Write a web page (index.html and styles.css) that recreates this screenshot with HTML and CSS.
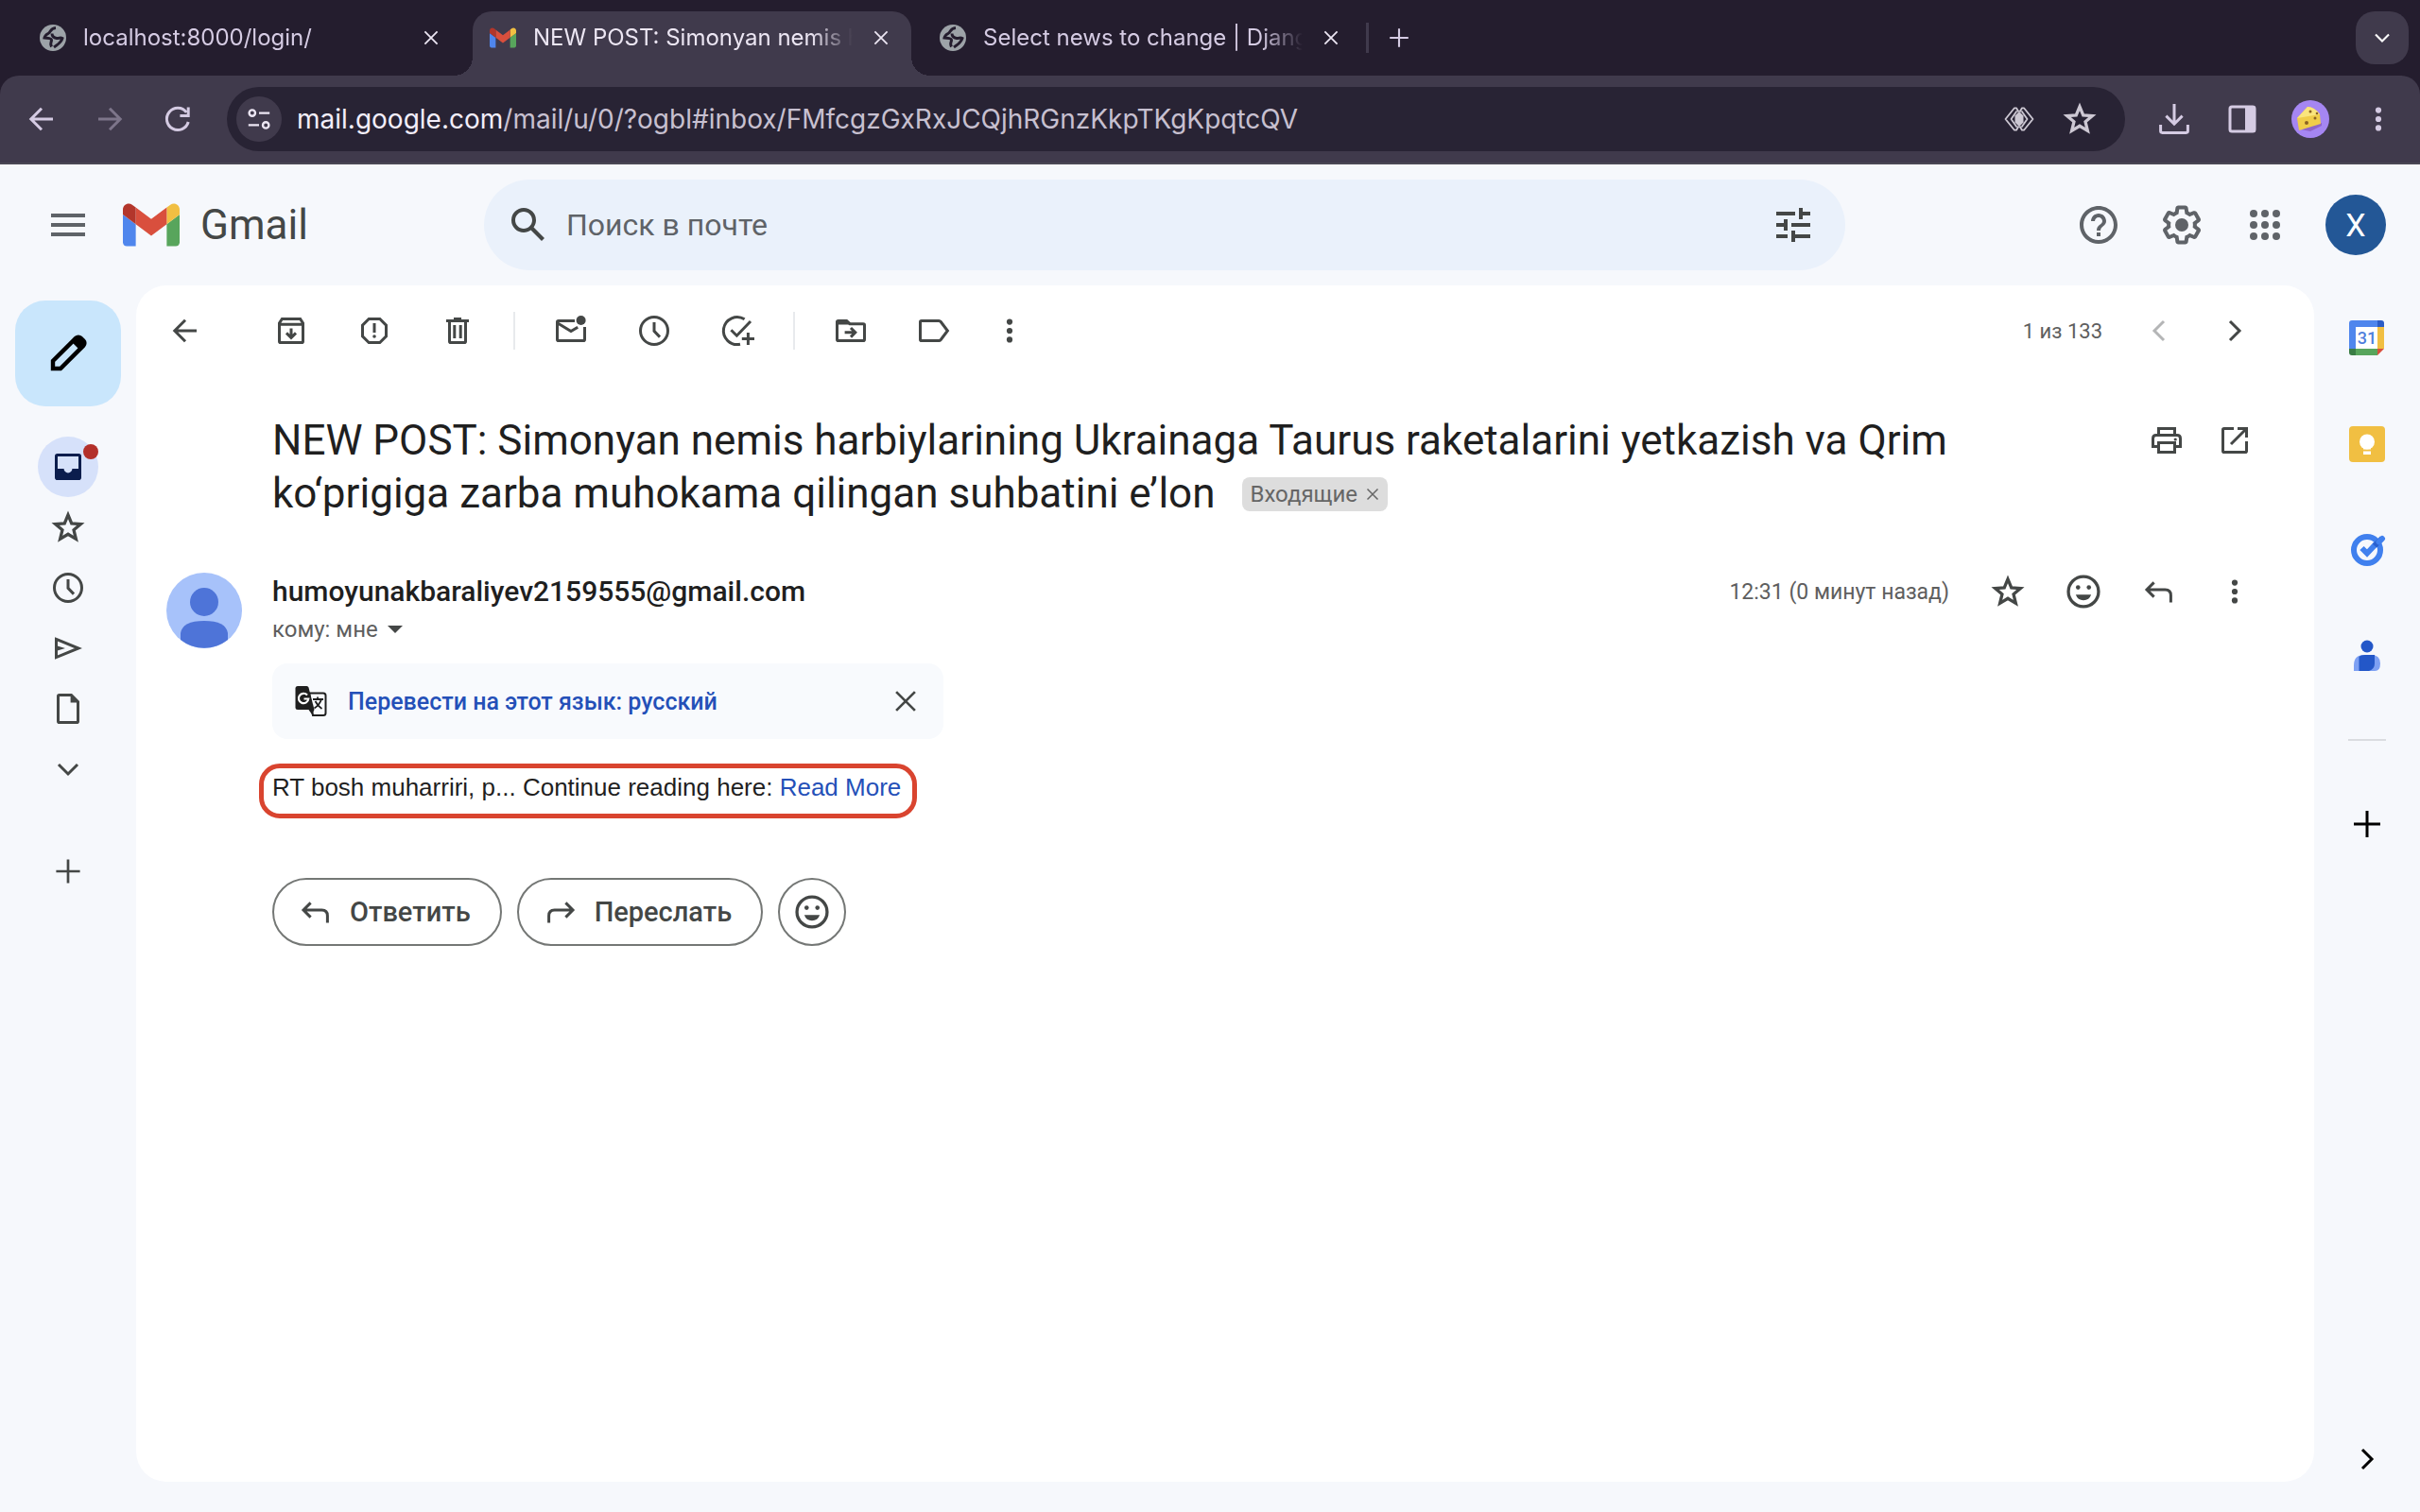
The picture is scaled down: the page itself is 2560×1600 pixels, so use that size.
FILE: index.html
```html
<!DOCTYPE html>
<html lang="ru">
<head>
<meta charset="utf-8">
<title>Gmail</title>
<link rel="stylesheet" href="styles.css">
</head>
<body>
<svg class="sprite" aria-hidden="true">
  <symbol id="globe" viewBox="0 0 28 28"><circle cx="14" cy="14" r="14" fill="#9da3a8"/><path d="M17 3.500C11 4 12 8 9 9.500C7 10.500 5.500 11.500 5 14C9 14.500 12.500 14 12.500 16.500C12.500 19 10.500 19.500 12.500 23.500M13 9.500C13 13 15 14 18 14.500C21 14.500 22 13.500 24 14.500C23 19 19 21 15 24" fill="none" stroke="#241d2e" stroke-width="3"/></symbol>
  <symbol id="gmail" viewBox="52 42 88 66"><path fill="#4f86ed" d="M58 108h14V74L52 59v43c0 3.320 2.690 6 6 6"/><path fill="#58a55c" d="M120 108h14c3.320 0 6-2.690 6-6V59l-20 15"/><path fill="#f1bf42" d="M120 48v26l20-15v-8c0-7.420-8.470-11.650-14.400-7.200"/><path fill="#d94f3d" d="M72 74V48l24 18 24-18v26L96 92"/><path fill="#b3362b" d="M52 51v8l20 15V48l-5.600-4.200c-5.940-4.450-14.400-.22-14.400 7.200"/></symbol>
  <symbol id="x" viewBox="0 0 20 20"><path d="M4.500 4.500l11 11M15.500 4.500l-11 11" class="ln"/></symbol>
  <symbol id="plus" viewBox="0 0 20 20"><path d="M10 3v14M3 10h14" class="ln"/></symbol>
  <symbol id="down" viewBox="0 0 20 20"><path d="M5 7.500l5 5 5-5" class="ln"/></symbol>
  <symbol id="left" viewBox="0 0 20 20"><path d="M12.500 5l-5 5 5 5" class="ln"/></symbol>
  <symbol id="right" viewBox="0 0 20 20"><path d="M7.500 5l5 5-5 5" class="ln"/></symbol>
  <symbol id="back" viewBox="0 0 20 20"><path d="M16 10H4.500M10 4.400L4.400 10l5.600 5.600" class="ln"/></symbol>
  <symbol id="fwd" viewBox="0 0 20 20"><path d="M4 10h11.500M10 4.400l5.600 5.600-5.600 5.600" class="ln"/></symbol>
  <symbol id="reload" viewBox="0 0 20 20"><path d="M15.600 11.500A5.800 5.800 0 1 1 14.600 6.400M15.600 3.800v4.400h-4.400" class="ln"/></symbol>
  <symbol id="site" viewBox="0 0 20 20"><g class="ln"><circle cx="5.500" cy="6" r="2"/><path d="M10 6h7M3 14h7"/><circle cx="14.500" cy="14" r="2"/></g></symbol>
  <symbol id="lens" viewBox="0 0 32 28"><path d="M16 6l4.500 4.500v7L16 22l-4.500-4.500v-7z" fill="currentColor"/><path d="M15.500 6.500L13 2.300H11L1.500 14 11 25.700h2L15.500 21.500M16.500 6.500L19 2.300H21L30.500 14 21 25.700h-2L16.500 21.500M13.500 5.500L7.500 14l6 8.500M18.500 5.500L24.500 14l-6 8.500" fill="none" stroke="currentColor" stroke-width="1.800" stroke-linejoin="round"/></symbol>
  <symbol id="star" viewBox="0 0 20 20"><path d="M10 4l1.700 4.100 4.400.35-3.350 2.850 1.050 4.300L10 13.300l-3.800 2.300 1.050-4.300L3.900 8.450l4.400-.35z" class="ln"/></symbol>
  <symbol id="download" viewBox="0 0 20 20"><path d="M10 2v10.500M5.700 8.300L10 12.600l4.300-4.300M2.800 13v3.300q0 .9.900.9h12.600q.9 0 .9-.9V13" class="ln"/></symbol>
  <symbol id="panel" viewBox="0 0 20 20"><rect x="3.500" y="3.500" width="13" height="13" rx="1" class="ln"/><path d="M11.500 3H16q1 0 1 1v12q0 1-1 1h-4.500z" fill="currentColor"/></symbol>
  <symbol id="cheese" viewBox="0 0 40 40"><circle cx="20" cy="20" r="20" fill="#a586f2"/><path d="M10 31L20 33 32 27V24L12 29z" fill="#8e65c8"/><path d="M6 19L17 7q7 0 13 8l1 10L8 32Z" fill="#f0cd4a"/><path d="M6 19L17 7q7 0 13 8z" fill="#fae57d"/><g fill="#8c6222"><circle cx="16" cy="24" r="2"/><circle cx="25" cy="19" r="1.500"/><circle cx="20" cy="12" r="1.500"/><circle cx="27" cy="14" r="1.300"/></g></symbol>
  <symbol id="more" viewBox="0 0 20 20"><g fill="currentColor"><circle cx="10" cy="5.300" r="1.550"/><circle cx="10" cy="10" r="1.550"/><circle cx="10" cy="14.700" r="1.550"/></g></symbol>
  <symbol id="menu" viewBox="0 0 24 24"><path fill="currentColor" d="M3 18h18v-2H3v2zm0-5h18v-2H3v2zm0-7v2h18V6H3z"/></symbol>
  <symbol id="search" viewBox="0 0 24 24"><path fill="currentColor" d="M20.490 19l-5.730-5.730C15.530 12.200 16 10.910 16 9.500A6.500 6.500 0 1 0 9.500 16c1.410 0 2.700-.47 3.770-1.240L19 20.490 20.490 19zM5 9.500C5 7.010 7.010 5 9.500 5S14 7.010 14 9.500 11.990 14 9.500 14 5 11.990 5 9.500z"/></symbol>
  <symbol id="tune" viewBox="0 0 24 24"><path fill="currentColor" d="M3 17v2h6v-2H3zM3 5v2h10V5H3zm10 16v-2h8v-2h-8v-2h-2v6h2zM7 9v2H3v2h4v2h2V9H7zm14 4v-2H11v2h10zm-6-4h2V7h4V5h-4V3h-2v6z"/></symbol>
  <symbol id="help" viewBox="0 0 24 24"><path fill="currentColor" d="M11 18h2v-2h-2v2zm1-16C6.480 2 2 6.480 2 12s4.480 10 10 10 10-4.480 10-10S17.520 2 12 2zm0 18c-4.410 0-8-3.590-8-8s3.590-8 8-8 8 3.590 8 8-3.590 8-8 8zm0-14c-2.210 0-4 1.790-4 4h2c0-1.100.9-2 2-2s2 .9 2 2c0 2-3 1.750-3 5h2c0-2.250 3-2.500 3-5 0-2.210-1.790-4-4-4z"/></symbol>
  <symbol id="gear" viewBox="0 0 24 24"><path fill="currentColor" d="M13.850 22.250h-3.700c-.74 0-1.360-.54-1.450-1.270l-.27-1.890c-.27-.14-.53-.29-.79-.46l-1.800.72c-.7.260-1.470-.03-1.810-.65L2.200 15.530c-.35-.66-.2-1.440.36-1.880l1.530-1.190c-.01-.15-.02-.3-.02-.46 0-.15.010-.31.020-.46l-1.520-1.190c-.59-.45-.74-1.260-.37-1.880l1.850-3.190c.34-.62 1.110-.9 1.790-.63l1.810.73c.26-.17.520-.32.780-.46l.27-1.910c.09-.7.710-1.250 1.440-1.250h3.700c.74 0 1.360.54 1.450 1.270l.27 1.890c.27.140.53.290.79.460l1.800-.72c.71-.26 1.480.03 1.820.65l1.840 3.180c.36.660.2 1.440-.36 1.880l-1.520 1.190c.01.150.02.300.02.460s-.01.310-.02.460l1.520 1.190c.56.450.72 1.230.37 1.860l-1.860 3.220c-.34.620-1.110.9-1.800.630l-1.800-.72c-.26.170-.52.320-.78.460l-.27 1.910c-.1.680-.72 1.220-1.460 1.220zm-3.230-2h2.760l.37-2.550.53-.22c.44-.18.880-.44 1.340-.78l.45-.34 2.380.96 1.380-2.400-2.030-1.580.07-.56c.03-.26.060-.51.060-.78s-.03-.53-.06-.78l-.07-.56 2.030-1.580-1.390-2.400-2.390.96-.45-.35c-.42-.32-.87-.58-1.330-.77l-.52-.22-.37-2.550h-2.760l-.37 2.550-.53.210c-.44.190-.88.440-1.340.790l-.45.330-2.380-.95-1.390 2.390 2.030 1.580-.07.560a7 7 0 0 0-.06.790c0 .26.020.53.060.780l.07.560-2.030 1.580 1.380 2.400 2.390-.96.450.35c.43.330.86.580 1.330.770l.53.220.38 2.550z"/><circle cx="12" cy="12" r="3.500" fill="currentColor"/></symbol>
  <symbol id="apps" viewBox="0 0 24 24"><g fill="currentColor"><circle cx="6" cy="6" r="2"/><circle cx="12" cy="6" r="2"/><circle cx="18" cy="6" r="2"/><circle cx="6" cy="12" r="2"/><circle cx="12" cy="12" r="2"/><circle cx="18" cy="12" r="2"/><circle cx="6" cy="18" r="2"/><circle cx="12" cy="18" r="2"/><circle cx="18" cy="18" r="2"/></g></symbol>
  <symbol id="pencil" viewBox="0 0 24 24"><path d="M4 20v-4L16.200 3.800a1.800 1.800 0 0 1 2.500 0l1.500 1.500a1.800 1.800 0 0 1 0 2.500L8 20z" fill="none" stroke="currentColor" stroke-width="2.200"/><path d="M14 6l4 4 2.800-2.800V5L19 3.200h-2.200z" fill="currentColor"/></symbol>
  <symbol id="inbox" viewBox="0 0 20 20"><path fill="currentColor" fill-rule="evenodd" d="M4.400 3h11.200A1.400 1.400 0 0 1 17 4.400v11.200a1.400 1.400 0 0 1-1.400 1.400H4.400A1.400 1.400 0 0 1 3 15.600V4.400A1.400 1.400 0 0 1 4.400 3zm.1 1.500v6.500h3.300a2.200 2.200 0 0 0 4.400 0h3.300V4.500z"/></symbol>
  <symbol id="clock" viewBox="0 0 20 20"><g class="ln"><circle cx="10" cy="10" r="7.250"/><path d="M10 5.500v4.700l3 3.100"/></g></symbol>
  <symbol id="send" viewBox="0 0 20 20"><path d="M3.750 5.200L15.500 10 3.750 14.800z" class="ln"/><path d="M3.500 8.500l5 1.500-5 1.500z" fill="currentColor"/></symbol>
  <symbol id="file" viewBox="0 0 20 20"><path d="M5.400 2.750h6.300l3.550 3.550v10.300q0 .65-.65.65H5.400q-.65 0-.65-.65V3.400q0-.65.650-.65z" class="ln"/><path d="M11.300 2.500v4.300h4.300z" fill="currentColor"/></symbol>
  <symbol id="archive" viewBox="0 0 20 20"><path d="M3.750 6v9.600q0 .65.650.65h11.200q.65 0 .65-.65V6L14.800 3.750H5.200zM3.750 6.600h12.500M10 8.800v4.700M7.500 11.200L10 13.700l2.500-2.500" class="ln"/></symbol>
  <symbol id="spam" viewBox="0 0 20 20"><path d="M7.100 3.750h5.800l3.350 3.350v5.800l-3.350 3.350H7.100L3.750 12.900V7.100zM10 6v5" class="ln"/><circle cx="10" cy="13" r=".9" fill="currentColor"/></symbol>
  <symbol id="trash" viewBox="0 0 20 20"><path d="M4 4.750h12M8 3.700h4M5.750 5v10.600q0 .65.650.65h7.200q.65 0 .65-.65V5M8.400 7v7M11.600 7v7" class="ln"/></symbol>
  <symbol id="unread" viewBox="0 0 20 20"><path d="M12 4.750H3.400q-.65 0-.65.65v9.200q0 .65.650.65h13.200q.65 0 .65-.65V8M3 6l7 4.300 3.600-2.200" class="ln"/><circle cx="15.300" cy="4.500" r="2.500" fill="currentColor"/></symbol>
  <symbol id="task" viewBox="0 0 20 20"><path d="M13.800 3.900A7.250 7.250 0 1 0 11.500 17.100M6.700 9.600l3 3L17 5M15.700 11v6.500M12.400 14.200H19" class="ln"/></symbol>
  <symbol id="move" viewBox="0 0 20 20"><path d="M2.750 5v9.600q0 .65.650.65h13.200q.65 0 .65-.65V7q0-.65-.65-.65H9.500L7.800 4.750H3.400q-.65 0-.65.65M6.800 10.900h5.500M10 8.500l2.400 2.400L10 13.300" class="ln"/><path d="M2.500 4.500h5.300l2 2.200H2.500z" fill="currentColor"/></symbol>
  <symbol id="label" viewBox="0 0 20 20"><path d="M3.400 4.750h9.200q.6 0 1 .5L17.200 10l-3.600 4.750q-.4.500-1 .5H3.400q-.65 0-.65-.65V5.400q0-.65.650-.65z" class="ln"/></symbol>
  <symbol id="print" viewBox="0 0 20 20"><path d="M5.750 7V3.750h8.500V7M5.500 13.250H2.750V9q0-1.750 1.750-1.750h11q1.750 0 1.750 1.750v4.250H14.500M5.750 11.250h8.500v5h-8.500z" class="ln"/><circle cx="14.600" cy="9.500" r=".8" fill="currentColor"/></symbol>
  <symbol id="open" viewBox="0 0 20 20"><path d="M9.500 3.750H4.400q-.65 0-.65.65v11.200q0 .65.650.65h11.200q.65 0 .65-.65V10.500M8 12l8-8M11.500 3.750h4.750V8.500" class="ln"/></symbol>
  <symbol id="smile" viewBox="0 0 20 20"><circle cx="10" cy="10" r="7.250" class="ln"/><g fill="currentColor"><circle cx="7.400" cy="8" r="1.050"/><circle cx="12.600" cy="8" r="1.050"/><path d="M6.300 11.500h7.400a3.900 3.900 0 0 1-7.400 0z"/></g></symbol>
  <symbol id="reply" viewBox="0 0 20 20"><path d="M7.300 5.200L3.500 9l3.800 3.800M3.800 9h9.400q3 0 3 3v3.800" class="ln"/></symbol>
  <symbol id="forward" viewBox="0 0 20 20"><path d="M12.700 5.200L16.500 9l-3.800 3.800M16.200 9H6.800q-3 0-3 3v3.800" class="ln"/></symbol>
  <symbol id="person" viewBox="0 0 80 80"><circle cx="40" cy="40" r="40" fill="#a7c2fa"/><circle cx="40" cy="31" r="15" fill="#4e74d8"/><path d="M15 71V64Q17 51 40 51T65 64V71A40 40 0 0 1 15 71z" fill="#4e74d8"/></symbol>
  <symbol id="translate" viewBox="0 0 34 34"><path d="M15 8.500h15q2.500 0 2.500 2.500v18.500q0 2.500-2.500 2.500H19z" fill="none" stroke="#1f1f1f" stroke-width="2"/><path d="M3 1h9.500q1.500 0 2 1.500L20.500 26H3q-2.500 0-2.500-2.500V3.500Q.5 1 3 1z" fill="#1f1f1f"/><path d="M14.500 26h6L18 31z" fill="#1f1f1f"/><path d="M13 10.500A5.200 5.200 0 1 0 14.300 14.500H9.500" fill="none" stroke="#fff" stroke-width="2.200"/><path d="M19 15h11M24 12.500V15M28 15q-2 6-7.500 9.500M21.500 17q2.500 5 7 8" fill="none" stroke="#1f1f1f" stroke-width="1.800"/></symbol>
  <symbol id="keep" viewBox="0 0 40 40"><rect x="1" y="1" width="38" height="38" rx="4" fill="#f1bf42"/><circle cx="20" cy="17.500" r="8" fill="#fff"/><path d="M16 22h8v3.500h-8zM16 27.500h8V31h-8z" fill="#fff"/></symbol>
  <symbol id="tasks" viewBox="0 4 40 40"><circle cx="20" cy="24" r="14" fill="none" stroke="#4080ee" stroke-width="6"/><path d="M14.500 22L20 27.500 29 18" fill="none" stroke="#4080ee" stroke-width="6"/><path d="M28 19.500L36 11.500" stroke="#2860cf" stroke-width="6"/><path d="M32.500 15.500L36 12" stroke="#4080ee" stroke-width="6" stroke-linecap="round"/></symbol>
  <symbol id="contacts" viewBox="0 0 40 40"><circle cx="20" cy="10" r="6.500" fill="#2357c8"/><path d="M6 36V30Q6 19 17 19h7Q34 19 34 28T27 36z" fill="#7da0f3"/><path d="M11.500 36V21Q13 19 18 19h10V28Q28 34 22 36z" fill="#2357c8"/></symbol>
</svg>

<div class="chrome">
  <div class="tabs">
    <div class="tab"><svg class="fav"><use href="#globe"/></svg><span class="tab-title">localhost:8000/login/</span><button class="tab-close" aria-label="Закрыть"><svg class="i24"><use href="#x"/></svg></button></div>
    <div class="tab active"><svg class="fav"><use href="#gmail"/></svg><span class="tab-title">NEW POST: Simonyan nemis harbiylarining</span><button class="tab-close" aria-label="Закрыть"><svg class="i24"><use href="#x"/></svg></button></div>
    <div class="tab"><svg class="fav"><use href="#globe"/></svg><span class="tab-title">Select news to change | Django site admin</span><button class="tab-close" aria-label="Закрыть"><svg class="i24"><use href="#x"/></svg></button></div>
    <span class="tab-sep"></span>
    <button class="new-tab" aria-label="Новая вкладка"><svg class="i28"><use href="#plus"/></svg></button>
    <button class="tab-list" aria-label="Список вкладок"><svg class="i28"><use href="#down"/></svg></button>
  </div>
  <div class="navbar">
    <div class="nav-group">
      <button class="nav-btn" aria-label="Назад"><svg class="i40"><use href="#back"/></svg></button>
      <button class="nav-btn dim" aria-label="Вперёд"><svg class="i40"><use href="#fwd"/></svg></button>
      <button class="nav-btn" aria-label="Обновить"><svg class="i40"><use href="#reload"/></svg></button>
    </div>
    <div class="omnibox">
      <button class="site-info" aria-label="О сайте"><svg class="i32"><use href="#site"/></svg></button>
      <p class="url"><b>mail.google.com</b>/mail/u/0/?ogbl#inbox/FMfcgzGxRxJCQjhRGnzKkpTKgKpqtcQV</p>
      <button class="omni-btn" aria-label="Объектив"><svg class="i32"><use href="#lens"/></svg></button>
      <button class="omni-btn" aria-label="Закладка"><svg class="i44"><use href="#star"/></svg></button>
    </div>
    <div class="nav-group">
      <button class="nav-btn" aria-label="Загрузки"><svg class="i40"><use href="#download"/></svg></button>
      <button class="nav-btn" aria-label="Боковая панель"><svg class="i40"><use href="#panel"/></svg></button>
      <button class="nav-btn" aria-label="Профиль"><svg class="i40"><use href="#cheese"/></svg></button>
      <button class="nav-btn" aria-label="Меню"><svg class="i40"><use href="#more"/></svg></button>
    </div>
  </div>
</div>

<header class="header">
  <div class="brand">
    <button class="icon-btn" aria-label="Главное меню"><svg class="i48"><use href="#menu"/></svg></button>
    <a class="logo" href="#"><svg class="logo-mark"><use href="#gmail"/></svg><span>Gmail</span></a>
  </div>
  <form class="search">
    <button type="button" class="search-btn" aria-label="Поиск"><svg class="i48"><use href="#search"/></svg></button>
    <input type="text" placeholder="Поиск в почте" aria-label="Поиск в почте">
    <button type="button" class="search-btn" aria-label="Параметры поиска"><svg class="i48"><use href="#tune"/></svg></button>
  </form>
  <div class="account">
    <button class="icon-btn" aria-label="Справка"><svg class="i48"><use href="#help"/></svg></button>
    <button class="icon-btn" aria-label="Настройки"><svg class="i48"><use href="#gear"/></svg></button>
    <button class="icon-btn" aria-label="Приложения"><svg class="i48"><use href="#apps"/></svg></button>
    <button class="avatar">X</button>
  </div>
</header>

<div class="layout">
  <nav class="side">
    <button class="compose" aria-label="Написать"><svg class="i48"><use href="#pencil"/></svg></button>
    <a class="side-link current" href="#" aria-label="Входящие"><svg class="i40"><use href="#inbox"/></svg><span class="dot"></span></a>
    <a class="side-link" href="#" aria-label="Помеченные"><svg class="i44"><use href="#star"/></svg></a>
    <a class="side-link" href="#" aria-label="Отложенные"><svg class="i40"><use href="#clock"/></svg></a>
    <a class="side-link" href="#" aria-label="Отправленные"><svg class="i40"><use href="#send"/></svg></a>
    <a class="side-link" href="#" aria-label="Черновики"><svg class="i40"><use href="#file"/></svg></a>
    <a class="side-link" href="#" aria-label="Ещё"><svg class="i40"><use href="#down"/></svg></a>
    <button class="side-add" aria-label="Создать ярлык"><svg class="i36"><use href="#plus"/></svg></button>
  </nav>

  <main class="card">
    <div class="toolbar">
      <button class="icon-btn first" aria-label="Назад"><svg class="i40"><use href="#back"/></svg></button>
      <button class="icon-btn" aria-label="Архивировать"><svg class="i40"><use href="#archive"/></svg></button>
      <button class="icon-btn" aria-label="Спам"><svg class="i40"><use href="#spam"/></svg></button>
      <button class="icon-btn" aria-label="Удалить"><svg class="i40"><use href="#trash"/></svg></button>
      <span class="sep"></span>
      <button class="icon-btn" aria-label="Не прочитано"><svg class="i40"><use href="#unread"/></svg></button>
      <button class="icon-btn" aria-label="Отложить"><svg class="i40"><use href="#clock"/></svg></button>
      <button class="icon-btn" aria-label="Добавить в Задачи"><svg class="i40"><use href="#task"/></svg></button>
      <span class="sep"></span>
      <button class="icon-btn" aria-label="Переместить"><svg class="i40"><use href="#move"/></svg></button>
      <button class="icon-btn" aria-label="Ярлыки"><svg class="i40"><use href="#label"/></svg></button>
      <button class="icon-btn narrow" aria-label="Ещё"><svg class="i40"><use href="#more"/></svg></button>
      <div class="pager">
        <span>1 из 133</span>
        <button class="icon-btn faded" aria-label="Предыдущее"><svg class="i40"><use href="#left"/></svg></button>
        <button class="icon-btn" aria-label="Следующее"><svg class="i40"><use href="#right"/></svg></button>
      </div>
    </div>

    <div class="subject">
      <h1>NEW POST: Simonyan nemis harbiylarining Ukrainaga Taurus raketalarini yetkazish va Qrim ko‘prigiga zarba muhokama qilingan suhbatini e’lon <span class="chip">Входящие<button aria-label="Убрать ярлык"><svg class="i20"><use href="#x"/></svg></button></span></h1>
      <div class="subject-tools">
        <button class="icon-btn" aria-label="Печать"><svg class="i40"><use href="#print"/></svg></button>
        <button class="icon-btn" aria-label="В новом окне"><svg class="i40"><use href="#open"/></svg></button>
      </div>
    </div>

    <article class="message">
      <svg class="sender-pic"><use href="#person"/></svg>
      <div class="content">
        <div class="meta">
          <div>
            <h2>humoyunakbaraliyev2159555@gmail.com</h2>
            <p class="to">кому: мне <span class="caret"></span></p>
          </div>
          <div class="meta-tools">
            <span class="date">12:31 (0 минут назад)</span>
            <button class="icon-btn" aria-label="Пометить"><svg class="i44"><use href="#star"/></svg></button>
            <button class="icon-btn" aria-label="Реакция"><svg class="i44"><use href="#smile"/></svg></button>
            <button class="icon-btn" aria-label="Ответить"><svg class="i40"><use href="#reply"/></svg></button>
            <button class="icon-btn" aria-label="Ещё"><svg class="i40"><use href="#more"/></svg></button>
          </div>
        </div>
        <div class="translate">
          <svg class="i34"><use href="#translate"/></svg>
          <a href="#">Перевести на этот язык: русский</a>
          <button class="icon-btn" aria-label="Закрыть"><svg class="i36"><use href="#x"/></svg></button>
        </div>
        <p class="text">RT bosh muharriri, p... Continue reading here: <a href="#">Read More</a></p>
        <div class="actions">
          <button class="pill"><svg class="i40"><use href="#reply"/></svg>Ответить</button>
          <button class="pill"><svg class="i40"><use href="#forward"/></svg>Переслать</button>
          <button class="pill round" aria-label="Реакция"><svg class="i44"><use href="#smile"/></svg></button>
        </div>
      </div>
    </article>
  </main>

  <aside class="rail">
    <button class="rail-btn" aria-label="Календарь">
      <svg class="i40" viewBox="0 0 40 40"><path d="M4 1h28v7H8v24H1V4q0-3 3-3z" fill="#4f86ed"/><path d="M31 1h4q3 0 3 3v4h-7z" fill="#2c5cc5"/><path d="M31 8h7v23h-7z" fill="#f1bf42"/><path d="M8 31h23v7H8z" fill="#58a55c"/><path d="M1 31h7v7H4q-3 0-3-3z" fill="#3a7d45"/><path d="M31 31h7l-7 7z" fill="#d94f3d"/><path d="M8 8h23v23H8z" fill="#fff"/><text x="20" y="26" class="day">31</text></svg>
    </button>
    <button class="rail-btn" aria-label="Keep"><svg class="i40"><use href="#keep"/></svg></button>
    <button class="rail-btn" aria-label="Задачи"><svg class="i40"><use href="#tasks"/></svg></button>
    <button class="rail-btn" aria-label="Контакты"><svg class="i40"><use href="#contacts"/></svg></button>
    <hr>
    <button class="rail-btn strong" aria-label="Дополнения"><svg class="i40"><use href="#plus"/></svg></button>
    <button class="rail-btn strong last" aria-label="Скрыть панель"><svg class="i40"><use href="#right"/></svg></button>
  </aside>
</div>
</body>
</html>
```
FILE: styles.css
```css
* { box-sizing: border-box; }
body {
  margin: 0;
  min-height: 100vh;
  display: flex;
  flex-direction: column;
  background: #f6f8fc;
  color: #1f1f1f;
  font-family: Roboto, "Liberation Sans", sans-serif;
  font-size: 24px;
}
h1, h2, p { margin: 0; font-weight: 400; }
button {
  padding: 0;
  border: 0;
  background: none;
  color: inherit;
  font: inherit;
  display: flex;
  align-items: center;
  justify-content: center;
}
a { color: #2450b8; text-decoration: none; }
svg { display: block; flex: none; }
.sprite { position: absolute; width: 0; height: 0; }
.ln { fill: none; stroke: currentColor; stroke-width: 1.5; }
.i20 { width: 20px; height: 20px; }
.i24 { width: 24px; height: 24px; }
.i28 { width: 28px; height: 28px; }
.i32 { width: 32px; height: 32px; }
.i34 { width: 34px; height: 34px; }
.i36 { width: 36px; height: 36px; }
.i40 { width: 40px; height: 40px; }
.i44 { width: 44px; height: 44px; }
.i48 { width: 48px; height: 48px; }
.icon-btn { width: 80px; height: 80px; flex: none; color: #444746; }

/* Browser window */
.chrome { background: #241d2e; font-family: Inter, sans-serif; color: #d5cbe3; }
.tabs { display: flex; height: 80px; padding: 12px 12px 0 24px; }
.tab {
  position: relative;
  display: flex;
  align-items: center;
  flex: 0 1 464px;
  min-width: 0;
  height: 68px;
  margin-right: 12px;
  padding: 0 16px 12px 18px;
}
.tab.active { background: #403a4c; border-radius: 20px 20px 0 0; color: #ece6f3; }
.tab.active::before, .tab.active::after {
  content: "";
  position: absolute;
  bottom: 0;
  width: 20px;
  height: 20px;
}
.tab.active::before { right: 100%; background: radial-gradient(circle at 0 0, transparent 20px, #403a4c 20px); }
.tab.active::after { left: 100%; background: radial-gradient(circle at 100% 0, transparent 20px, #403a4c 20px); }
.fav { width: 28px; height: 28px; }
.tab-title {
  flex: 1;
  min-width: 0;
  margin: 0 14px 0 18px;
  overflow: hidden;
  white-space: nowrap;
  line-height: 32px;
  mask-image: linear-gradient(to right, #000 calc(100% - 44px), transparent);
}
.tab-close { width: 32px; height: 32px; }
.tab-close .ln, .tab-list .ln, .new-tab .ln { stroke-width: 2; }
.tab-close { color: #ece6f3; }
.tab-sep { width: 3px; height: 32px; margin: 12px 8px 0 -7px; background: #403a4c; }
.new-tab { width: 48px; height: 56px; }
.tab-list { width: 56px; height: 56px; margin-left: auto; border-radius: 20px; background: #403a4c; color: #fff; }
.navbar {
  display: flex;
  align-items: center;
  gap: 24px;
  height: 94px;
  padding: 0 16px;
  border-bottom: 2px solid #4a4754;
  border-radius: 20px 20px 0 0;
  background: #403a4c;
}
.nav-group { display: flex; gap: 16px; }
.nav-btn { width: 56px; height: 56px; }
.nav-btn .ln { stroke-width: 2; }
.dim { color: #7d758a; }
.omnibox {
  display: flex;
  align-items: center;
  flex: 1;
  min-width: 0;
  height: 68px;
  padding: 0 16px 0 10px;
  border-radius: 34px;
  background: #282334;
}
.site-info { width: 48px; height: 48px; border-radius: 50%; background: #403a4c; color: #ece6f3; }
.site-info .ln { stroke-width: 2; }
.url { flex: 1; min-width: 0; margin-left: 16px; overflow: hidden; white-space: nowrap; font-size: 28px; color: #c7c0d0; }
.url b { font-weight: 400; color: #f3eefa; }
.omni-btn { width: 64px; height: 56px; color: #cdc8d3; }

/* Gmail header */
.header { display: flex; align-items: center; height: 128px; padding-right: 36px; }
.brand { display: flex; align-items: center; flex: 0 0 512px; padding-left: 32px; }
.brand .icon-btn, .account .icon-btn { color: #5f6368; }
.logo { display: flex; align-items: center; gap: 22px; margin-left: 18px; color: #444746; font-size: 44px; }
.logo-mark { width: 60px; height: 46px; }
.search {
  display: flex;
  align-items: center;
  flex: 0 1 1440px;
  height: 96px;
  padding: 0 15px 0 7px;
  border-radius: 48px;
  background: #eaf1fb;
}
.search-btn { width: 80px; height: 80px; color: #444746; }
.search input {
  flex: 1;
  min-width: 0;
  padding: 0;
  border: 0;
  outline: 0;
  background: none;
  font: inherit;
  font-size: 32px;
}
.search input::placeholder { color: #5f6368; opacity: 1; }
.account { display: flex; align-items: center; gap: 8px; margin-left: auto; }
.avatar { width: 64px; height: 64px; margin-left: 16px; border-radius: 50%; background: #235796; color: #fff; font-size: 34px; }

/* Page columns */
.layout { flex: 1; display: grid; grid-template-columns: 144px minmax(0, 1fr) 112px; }
.side { display: flex; flex-direction: column; align-items: center; padding-top: 16px; }
.compose { width: 112px; height: 112px; margin-bottom: 32px; border-radius: 32px; background: #c9e6fc; color: #000; }
.side-link {
  position: relative;
  display: flex;
  align-items: center;
  justify-content: center;
  width: 64px;
  height: 64px;
  border-radius: 50%;
  color: #444746;
}
.side-link.current { background: #d6e1fa; color: #0b1d4d; }
.dot { position: absolute; top: 8px; right: 0; width: 16px; height: 16px; border-radius: 50%; background: #b3302a; }
.side-add { width: 64px; height: 64px; margin-top: 44px; color: #444746; }
.card { margin-bottom: 32px; border-radius: 32px; background: #fff; }

.toolbar { display: flex; align-items: center; gap: 8px; height: 96px; padding: 0 44px 0 12px; }
.first { margin-right: 24px; }
.narrow { width: 64px; }
.sep { width: 2px; height: 40px; margin: 0 11px; background: #e8eaed; }
.pager { display: flex; align-items: center; margin-left: auto; color: #5e5e5e; font-size: 22px; }
.pager span { margin-right: 20px; }
.faded { color: #b4b5b6; }

.subject { display: flex; justify-content: space-between; padding: 40px 48px 0 144px; }
.subject h1 { font-size: 44px; line-height: 56px; }
.chip {
  display: inline-flex;
  align-items: center;
  gap: 6px;
  height: 36px;
  margin-left: 18px;
  padding: 0 6px 0 8px;
  border-radius: 8px;
  background: #ddd;
  color: #666;
  font-size: 24px;
  line-height: 32px;
  vertical-align: 6px;
}
.chip .ln { stroke-width: 2; }
.subject-tools { display: flex; }
.subject-tools .icon-btn { width: 72px; height: 56px; }

.message { display: flex; gap: 32px; padding: 56px 44px 64px 32px; }
.sender-pic { width: 80px; height: 80px; }
.content { flex: 1; min-width: 0; }
.meta { display: flex; justify-content: space-between; height: 80px; }
.meta h2 { font-size: 30px; line-height: 40px; font-weight: 500; }
.to { display: flex; align-items: center; gap: 10px; line-height: 40px; color: #5e5e5e; }
.caret { border: 8px solid transparent; border-top-color: #444746; border-bottom: 0; }
.meta-tools { display: flex; align-items: center; height: 40px; }
.date { margin-right: 22px; color: #5e5e5e; font-size: 23px; }
.translate {
  display: flex;
  align-items: center;
  width: 710px;
  height: 80px;
  margin-top: 16px;
  padding-left: 24px;
  border-radius: 16px;
  background: #f8fafd;
}
.translate a { flex: 1; margin-left: 22px; font-size: 25px; font-weight: 500; }
.text {
  width: fit-content;
  margin: 26px 0 63px -14px;
  padding: 4px 12px 12px 9px;
  border: 5px solid #d9442f;
  border-radius: 22px;
  font-family: "Liberation Sans", Arial, sans-serif;
  font-size: 26px;
  line-height: 32px;
}
.actions { display: flex; gap: 16px; }
.pill {
  gap: 16px;
  height: 72px;
  padding: 0 31px 0 24px;
  border: 2px solid #747775;
  border-radius: 36px;
  color: #444746;
  font-size: 29px;
  font-weight: 500;
}
.pill.round { width: 72px; padding: 0; }

.rail { display: flex; flex-direction: column; align-items: center; }
.rail-btn { width: 112px; height: 112px; flex: none; }
.rail hr { width: 40px; height: 2px; margin: 32px 0; border: 0; background: #dadce0; }
.strong { color: #000; }
.strong .ln { stroke-width: 2; }
.last { margin-top: auto; }
.day { fill: #4f7fdc; font-size: 18px; font-weight: 500; text-anchor: middle; }
```
